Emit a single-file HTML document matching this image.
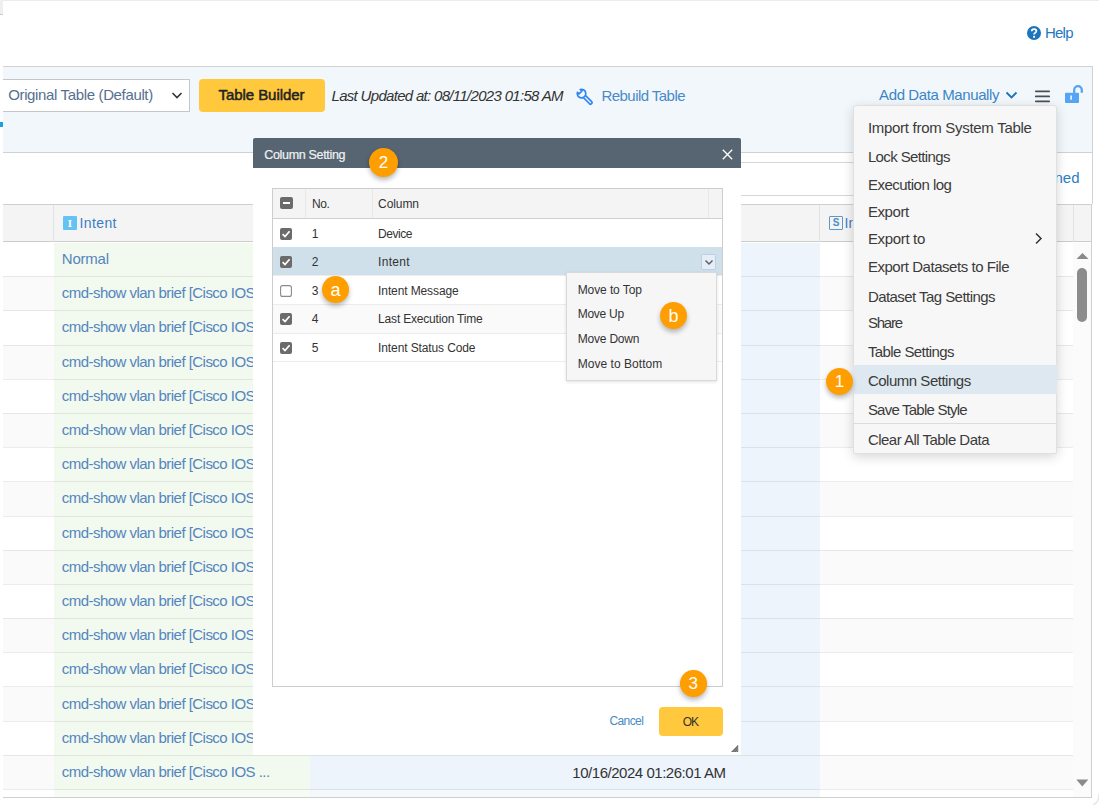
<!DOCTYPE html>
<html><head><meta charset="utf-8"><style>
html,body{margin:0;padding:0;width:1099px;height:807px;overflow:hidden;background:#fff;position:relative;font-family:"Liberation Sans",sans-serif;}
body>div,body>svg,body>span{position:absolute;box-sizing:border-box;}
.tx{position:absolute;white-space:nowrap;line-height:1;}
.bd{position:absolute;border-radius:50%;background:#fe9e00;color:#fff;text-align:center;box-shadow:0 3px 5px rgba(0,0,0,0.28);font-family:"Liberation Sans",sans-serif;}
</style></head><body>
<div style="left:0.00px;top:0.00px;width:1099.00px;height:1.00px;background:#ececec;"></div>
<div style="left:0.00px;top:0.00px;width:3.00px;height:13.50px;background:#efefef;"></div>
<div style="left:0.00px;top:13.50px;width:3.00px;height:1.00px;background:#c9c9c9;"></div>
<svg style="left:1027px;top:26px;width:14px;height:14px;" viewBox="0 0 14 14"><circle cx="7" cy="7" r="7" fill="#1b75bb"/><path d="M4.7 5.3 C4.7 3.9 5.8 3.1 7.1 3.1 C8.5 3.1 9.4 4 9.4 5.1 C9.4 6.3 8.3 6.7 7.7 7.2 C7.2 7.6 7.1 7.9 7.1 8.6" fill="none" stroke="#fff" stroke-width="1.8"/><circle cx="7.1" cy="10.8" r="1.1" fill="#fff"/></svg>
<span id="help" class="tx" style="left:1045.00px;top:24.80px;font-size:15px;color:#1f78c1;letter-spacing:-0.785px;">Help</span>
<div style="left:3.00px;top:66.00px;width:1089.50px;height:87.00px;background:#f2f7fc;border-top:1px solid #d2d2d2;border-bottom:1px solid #d2d2d2;border-right:1px solid #d2d2d2;"></div>
<div style="left:0.00px;top:122.00px;width:3.00px;height:5.00px;background:#1ea0e0;"></div>
<div style="left:3.00px;top:78.50px;width:186.50px;height:33.50px;background:#fff;border:1px solid #c6c6c6;border-left:none;"></div>
<span id="orig" class="tx" style="left:8.20px;top:86.90px;font-size:15px;color:#56708f;letter-spacing:-0.354px;">Original Table (Default)</span>
<svg style="left:171px;top:91px;width:12px;height:9px;" viewBox="0 0 12 9"><path d="M1.5 2 L6 6.5 L10.5 2" fill="none" stroke="#333" stroke-width="1.6"/></svg>
<div style="left:199.00px;top:78.50px;width:126.00px;height:33.50px;background:#ffc83d;border-radius:4px;"></div>
<span id="tb" class="tx" style="left:218.50px;top:87.30px;font-size:15px;color:#222;letter-spacing:-0.061px;-webkit-text-stroke:0.5px #222;">Table Builder</span>
<span id="last" class="tx" style="left:331.50px;top:87.90px;font-size:15px;color:#333;letter-spacing:-0.687px;font-style:italic;">Last Updated at: 08/11/2023 01:58 AM</span>
<svg style="left:574px;top:87px;width:20px;height:20px;" viewBox="0 0 20 20"><path d="M6.24 2.49 A4.3 4.3 0 1 1 3.39 5.34 L5.02 6.97 L7.87 4.12 Z M9.48 10.7 L15.54 16.76 A1.5 1.5 0 0 0 17.66 14.64 L11.6 8.58" fill="none" stroke="#2f86f0" stroke-width="1.7" stroke-linejoin="round"/></svg>
<span id="rebuild" class="tx" style="left:601.50px;top:87.80px;font-size:15px;color:#4a8ac8;letter-spacing:-0.552px;">Rebuild Table</span>
<span id="adm" class="tx" style="left:879.10px;top:87.10px;font-size:15px;color:#3b86c6;letter-spacing:-0.397px;">Add Data Manually</span>
<svg style="left:1005px;top:90px;width:13px;height:10px;" viewBox="0 0 13 10"><path d="M1.5 2.5 L6.5 7.5 L11.5 2.5" fill="none" stroke="#1f70c0" stroke-width="1.8"/></svg>
<svg style="left:1034px;top:88px;width:17px;height:17px;" viewBox="0 0 17 17"><path d="M1.8 3.3 H15.2 M1.8 8.4 H15.2 M1.8 13.3 H15.2" stroke="#4a4f57" stroke-width="1.7" stroke-linecap="round"/></svg>
<svg style="left:1063px;top:84px;width:22px;height:20px;" viewBox="0 0 22 20"><path d="M11.2 9.5 V5.9 A3.8 3.8 0 0 1 18.8 5.9 V8.8" fill="none" stroke="#56a5f5" stroke-width="2.3"/><rect x="2" y="8.8" width="14" height="10.2" rx="1" fill="#56a5f5"/><rect x="7.3" y="11.5" width="1.6" height="4.2" fill="#f2f7fc"/></svg>
<div style="left:600.00px;top:162.00px;width:450.00px;height:34.00px;background:#fff;border-top:1px solid #d6d6d6;border-bottom:1px solid #d6d6d6;"></div>
<div style="left:1091.50px;top:152.00px;width:1.00px;height:52.00px;background:#d2d2d2;"></div>
<span id="ned" class="tx" style="right:19.50px;top:170.40px;font-size:15px;color:#2a7fc0;letter-spacing:0.000px;">Assigned</span>
<div style="left:3.00px;top:204.00px;width:1088.50px;height:38.00px;background:#f4f4f4;border-top:1px solid #cfcfcf;border-bottom:1px solid #cccccc;"></div>
<div style="left:53.00px;top:205.00px;width:1.00px;height:36.50px;background:#e2e2e2;"></div>
<div style="left:819.00px;top:205.00px;width:1.00px;height:36.50px;background:#e2e2e2;"></div>
<div style="left:1073.00px;top:205.00px;width:1.00px;height:36.50px;background:#e2e2e2;"></div>
<div style="left:63px;top:216px;width:14px;height:14px;background:#64c3f3;border-radius:1px;color:#fff;font:bold 11px/14px 'Liberation Serif',serif;text-align:center;">I</div>
<span id="hint" class="tx" style="left:79.50px;top:215.95px;font-size:14px;color:#3b7dc4;letter-spacing:0.392px;">Intent</span>
<div style="left:829px;top:216px;width:14px;height:14px;border:1px solid #5a9acb;border-radius:1px;color:#4a8fc4;font:bold 10px/12px Liberation Sans,sans-serif;text-align:center;">S</div>
<span id="hin" class="tx" style="left:844.50px;top:215.95px;font-size:14px;color:#3b7dc4;letter-spacing:0.000px;">Intent Status</span>
<div style="left:3.00px;top:242.50px;width:1070.00px;height:554.80px;background:#fff;"></div>
<div style="left:3.00px;top:276.40px;width:1070.00px;height:34.19px;background:#fafafa;"></div>
<div style="left:3.00px;top:344.78px;width:1070.00px;height:34.19px;background:#fafafa;"></div>
<div style="left:3.00px;top:413.16px;width:1070.00px;height:34.19px;background:#fafafa;"></div>
<div style="left:3.00px;top:481.54px;width:1070.00px;height:34.19px;background:#fafafa;"></div>
<div style="left:3.00px;top:549.92px;width:1070.00px;height:34.19px;background:#fafafa;"></div>
<div style="left:3.00px;top:618.30px;width:1070.00px;height:34.19px;background:#fafafa;"></div>
<div style="left:3.00px;top:686.68px;width:1070.00px;height:34.19px;background:#fafafa;"></div>
<div style="left:3.00px;top:755.06px;width:1070.00px;height:34.19px;background:#fafafa;"></div>
<div style="left:54.00px;top:242.50px;width:256.00px;height:554.80px;background:#f2f9ee;"></div>
<div style="left:310.00px;top:242.50px;width:510.00px;height:554.80px;background:#edf4fc;"></div>
<div style="left:3.00px;top:276.20px;width:1070.00px;height:1.00px;background:rgba(0,0,0,0.075);"></div>
<div style="left:3.00px;top:310.39px;width:1070.00px;height:1.00px;background:rgba(0,0,0,0.075);"></div>
<div style="left:3.00px;top:344.58px;width:1070.00px;height:1.00px;background:rgba(0,0,0,0.075);"></div>
<div style="left:3.00px;top:378.77px;width:1070.00px;height:1.00px;background:rgba(0,0,0,0.075);"></div>
<div style="left:3.00px;top:412.96px;width:1070.00px;height:1.00px;background:rgba(0,0,0,0.075);"></div>
<div style="left:3.00px;top:447.15px;width:1070.00px;height:1.00px;background:rgba(0,0,0,0.075);"></div>
<div style="left:3.00px;top:481.34px;width:1070.00px;height:1.00px;background:rgba(0,0,0,0.075);"></div>
<div style="left:3.00px;top:515.53px;width:1070.00px;height:1.00px;background:rgba(0,0,0,0.075);"></div>
<div style="left:3.00px;top:549.72px;width:1070.00px;height:1.00px;background:rgba(0,0,0,0.075);"></div>
<div style="left:3.00px;top:583.91px;width:1070.00px;height:1.00px;background:rgba(0,0,0,0.075);"></div>
<div style="left:3.00px;top:618.10px;width:1070.00px;height:1.00px;background:rgba(0,0,0,0.075);"></div>
<div style="left:3.00px;top:652.29px;width:1070.00px;height:1.00px;background:rgba(0,0,0,0.075);"></div>
<div style="left:3.00px;top:686.48px;width:1070.00px;height:1.00px;background:rgba(0,0,0,0.075);"></div>
<div style="left:3.00px;top:720.67px;width:1070.00px;height:1.00px;background:rgba(0,0,0,0.075);"></div>
<div style="left:3.00px;top:754.86px;width:1070.00px;height:1.00px;background:rgba(0,0,0,0.075);"></div>
<div style="left:3.00px;top:789.05px;width:1070.00px;height:1.00px;background:rgba(0,0,0,0.075);"></div>
<div style="left:3.00px;top:796.80px;width:1089.00px;height:1.20px;background:#cfcfcf;"></div>
<div style="left:1091.00px;top:204.00px;width:1.00px;height:593.30px;background:#d0d0d0;"></div>
<div style="left:1073.00px;top:242.50px;width:18.00px;height:554.80px;background:#fbfbfb;"></div>
<div style="left:3.00px;top:790.00px;width:1070.00px;height:7.30px;background:rgba(255,255,255,0.35);"></div>
<span id="normal" class="tx" style="left:61.80px;top:250.90px;font-size:15px;color:#5485be;letter-spacing:-0.229px;">Normal</span>
<span id="cmd0" class="tx" style="left:61.80px;top:285.30px;font-size:15px;color:#5485be;letter-spacing:-0.534px;">cmd-show vlan brief [Cisco IOS ...</span>
<span id="cmd1" class="tx" style="left:61.80px;top:319.49px;font-size:15px;color:#5485be;letter-spacing:-0.534px;">cmd-show vlan brief [Cisco IOS ...</span>
<span id="cmd2" class="tx" style="left:61.80px;top:353.68px;font-size:15px;color:#5485be;letter-spacing:-0.534px;">cmd-show vlan brief [Cisco IOS ...</span>
<span id="cmd3" class="tx" style="left:61.80px;top:387.87px;font-size:15px;color:#5485be;letter-spacing:-0.534px;">cmd-show vlan brief [Cisco IOS ...</span>
<span id="cmd4" class="tx" style="left:61.80px;top:422.06px;font-size:15px;color:#5485be;letter-spacing:-0.534px;">cmd-show vlan brief [Cisco IOS ...</span>
<span id="cmd5" class="tx" style="left:61.80px;top:456.25px;font-size:15px;color:#5485be;letter-spacing:-0.534px;">cmd-show vlan brief [Cisco IOS ...</span>
<span id="cmd6" class="tx" style="left:61.80px;top:490.44px;font-size:15px;color:#5485be;letter-spacing:-0.534px;">cmd-show vlan brief [Cisco IOS ...</span>
<span id="cmd7" class="tx" style="left:61.80px;top:524.63px;font-size:15px;color:#5485be;letter-spacing:-0.534px;">cmd-show vlan brief [Cisco IOS ...</span>
<span id="cmd8" class="tx" style="left:61.80px;top:558.82px;font-size:15px;color:#5485be;letter-spacing:-0.534px;">cmd-show vlan brief [Cisco IOS ...</span>
<span id="cmd9" class="tx" style="left:61.80px;top:593.01px;font-size:15px;color:#5485be;letter-spacing:-0.534px;">cmd-show vlan brief [Cisco IOS ...</span>
<span id="cmd10" class="tx" style="left:61.80px;top:627.20px;font-size:15px;color:#5485be;letter-spacing:-0.534px;">cmd-show vlan brief [Cisco IOS ...</span>
<span id="cmd11" class="tx" style="left:61.80px;top:661.39px;font-size:15px;color:#5485be;letter-spacing:-0.534px;">cmd-show vlan brief [Cisco IOS ...</span>
<span id="cmd12" class="tx" style="left:61.80px;top:695.58px;font-size:15px;color:#5485be;letter-spacing:-0.534px;">cmd-show vlan brief [Cisco IOS ...</span>
<span id="cmd13" class="tx" style="left:61.80px;top:729.77px;font-size:15px;color:#5485be;letter-spacing:-0.534px;">cmd-show vlan brief [Cisco IOS ...</span>
<span id="cmd14" class="tx" style="left:61.80px;top:763.96px;font-size:15px;color:#5485be;letter-spacing:-0.534px;">cmd-show vlan brief [Cisco IOS ...</span>
<span id="date" class="tx" style="left:572.30px;top:765.10px;font-size:15px;color:#333;letter-spacing:-0.466px;">10/16/2024 01:26:01 AM</span>
<svg style="left:1076px;top:252px;width:13px;height:8px;" viewBox="0 0 13 8"><path d="M0.5 7 L6.5 1 L12.5 7 Z" fill="#8a8a8a"/></svg>
<div style="left:1077.00px;top:268.00px;width:10.00px;height:54.00px;background:#8c8c8c;border-radius:5px;"></div>
<svg style="left:1076px;top:778.5px;width:13px;height:9px;" viewBox="0 0 13 9"><path d="M0.3 0.6 L6.3 7.6 L12.3 0.6 Z" fill="#8a8a8a"/></svg>
<svg style="left:1090px;top:792px;width:9px;height:15px;" viewBox="0 0 9 15"><path d="M9 2 Q9 11 3 12.5" fill="none" stroke="#e6e6e6" stroke-width="1.4"/></svg>
<div style="left:253.00px;top:138.40px;width:488.00px;height:617.00px;background:#fff;border-radius:2px 2px 0 0;"></div>
<div style="left:253.00px;top:138.40px;width:488.00px;height:30.00px;background:#566571;border-radius:2px 2px 0 0;"></div>
<span id="dtitle" class="tx" style="left:264.30px;top:149.42px;font-size:12.5px;color:#f0f2f4;letter-spacing:-0.328px;-webkit-text-stroke:0.2px #f0f2f4;">Column Setting</span>
<svg style="left:722px;top:149px;width:11px;height:11px;" viewBox="0 0 11 11"><path d="M0.8 0.8 L10.2 10.2 M10.2 0.8 L0.8 10.2" stroke="#fff" stroke-width="1.3"/></svg>
<div style="left:272.00px;top:188.20px;width:451.00px;height:498.60px;background:#fff;border:1px solid #cdcdcd;box-sizing:border-box;"></div>
<div style="left:273.00px;top:189.20px;width:449.00px;height:29.50px;background:#f4f4f4;border-bottom:1px solid #d0d0d0;"></div>
<div style="left:305.00px;top:189.20px;width:1.00px;height:29.00px;background:#e8e8e8;"></div>
<div style="left:372.00px;top:189.20px;width:1.00px;height:29.00px;background:#e8e8e8;"></div>
<div style="left:707.70px;top:189.20px;width:1.00px;height:29.00px;background:#e8e8e8;"></div>
<div style="left:273.00px;top:304.20px;width:449.00px;height:28.80px;background:#fafafa;"></div>
<div style="left:273.00px;top:247.30px;width:449.00px;height:28.40px;background:#cfe0ea;"></div>
<div style="left:273.00px;top:275.20px;width:449.00px;height:1.00px;background:#ececec;"></div>
<div style="left:273.00px;top:303.70px;width:449.00px;height:1.00px;background:#ececec;"></div>
<div style="left:273.00px;top:332.50px;width:449.00px;height:1.00px;background:#ececec;"></div>
<div style="left:273.00px;top:360.70px;width:449.00px;height:1.00px;background:#ececec;"></div>
<div style="left:280px;top:197px;width:12.5px;height:12px;background:#6b6b6b;border-radius:2px;"></div>
<div style="left:282.60px;top:202.20px;width:7.30px;height:1.80px;background:#fff;"></div>
<span id="no" class="tx" style="left:312.00px;top:197.84px;font-size:12px;color:#333;letter-spacing:-0.444px;">No.</span>
<span id="colh" class="tx" style="left:378.10px;top:197.74px;font-size:12px;color:#333;letter-spacing:-0.091px;">Column</span>
<svg style="left:279.8px;top:228.2px;width:12px;height:12px;" viewBox="0 0 12 12"><rect x="0" y="0" width="12" height="12" rx="2" fill="#6b6b6b"/><path d="M2.6 6.2 L5 8.6 L9.6 3.2" fill="none" stroke="#fff" stroke-width="1.7"/></svg>
<span id="dn1" class="tx" style="left:311.70px;top:228.34px;font-size:12px;color:#333;letter-spacing:0.000px;">1</span>
<span id="dc1" class="tx" style="left:378.10px;top:228.34px;font-size:12px;color:#333;letter-spacing:-0.459px;">Device</span>
<svg style="left:279.8px;top:256.3px;width:12px;height:12px;" viewBox="0 0 12 12"><rect x="0" y="0" width="12" height="12" rx="2" fill="#6b6b6b"/><path d="M2.6 6.2 L5 8.6 L9.6 3.2" fill="none" stroke="#fff" stroke-width="1.7"/></svg>
<span id="dn2" class="tx" style="left:311.70px;top:256.24px;font-size:12px;color:#333;letter-spacing:0.000px;">2</span>
<span id="dc2" class="tx" style="left:378.10px;top:256.24px;font-size:12px;color:#333;letter-spacing:0.313px;">Intent</span>
<svg style="left:279.8px;top:284.7px;width:12px;height:12px;" viewBox="0 0 12 12"><rect x="0.6" y="0.6" width="10.8" height="10.8" rx="2" fill="#fff" stroke="#8a8a8a" stroke-width="1.1"/></svg>
<span id="dn3" class="tx" style="left:311.70px;top:285.24px;font-size:12px;color:#333;letter-spacing:0.000px;">3</span>
<span id="dc3" class="tx" style="left:378.10px;top:285.24px;font-size:12px;color:#333;letter-spacing:-0.112px;">Intent Message</span>
<svg style="left:279.8px;top:313.2px;width:12px;height:12px;" viewBox="0 0 12 12"><rect x="0" y="0" width="12" height="12" rx="2" fill="#6b6b6b"/><path d="M2.6 6.2 L5 8.6 L9.6 3.2" fill="none" stroke="#fff" stroke-width="1.7"/></svg>
<span id="dn4" class="tx" style="left:311.70px;top:313.44px;font-size:12px;color:#333;letter-spacing:0.000px;">4</span>
<span id="dc4" class="tx" style="left:378.10px;top:313.44px;font-size:12px;color:#333;letter-spacing:-0.187px;">Last Execution Time</span>
<svg style="left:279.8px;top:342.0px;width:12px;height:12px;" viewBox="0 0 12 12"><rect x="0" y="0" width="12" height="12" rx="2" fill="#6b6b6b"/><path d="M2.6 6.2 L5 8.6 L9.6 3.2" fill="none" stroke="#fff" stroke-width="1.7"/></svg>
<span id="dn5" class="tx" style="left:311.70px;top:342.14px;font-size:12px;color:#333;letter-spacing:0.000px;">5</span>
<span id="dc5" class="tx" style="left:378.10px;top:342.14px;font-size:12px;color:#333;letter-spacing:-0.118px;">Intent Status Code</span>
<div style="left:701px;top:254.2px;width:15px;height:15.5px;border:1px solid #bdd0e8;background:#e4edf8;border-radius:1px;"></div>
<svg style="left:703.5px;top:259px;width:10px;height:7px;" viewBox="0 0 10 7"><path d="M1.5 1.5 L5 5 L8.5 1.5" fill="none" stroke="#616161" stroke-width="1.5"/></svg>
<div style="left:565.60px;top:272.30px;width:151.70px;height:108.70px;background:#f6f6f6;border:1px solid #d9d9d9;box-sizing:border-box;box-shadow:0 1px 3px rgba(0,0,0,0.12);"></div>
<span id="mv1" class="tx" style="left:577.70px;top:284.14px;font-size:12px;color:#333;letter-spacing:-0.096px;">Move to Top</span>
<span id="mv2" class="tx" style="left:577.70px;top:308.34px;font-size:12px;color:#333;letter-spacing:-0.254px;">Move Up</span>
<span id="mv3" class="tx" style="left:577.70px;top:333.04px;font-size:12px;color:#333;letter-spacing:-0.195px;">Move Down</span>
<span id="mv4" class="tx" style="left:577.70px;top:357.74px;font-size:12px;color:#333;letter-spacing:0.043px;">Move to Bottom</span>
<span id="cancel" class="tx" style="left:609.50px;top:715.34px;font-size:12px;color:#4a8ac4;letter-spacing:-0.612px;">Cancel</span>
<div style="left:659.20px;top:707.30px;width:64.00px;height:28.40px;background:#ffc83d;border-radius:4px;"></div>
<span id="ok" class="tx" style="left:682.70px;top:715.64px;font-size:12px;color:#333;letter-spacing:-1.042px;">OK</span>
<svg style="left:730px;top:744px;width:9px;height:9px;" viewBox="0 0 9 9"><path d="M8.2 0.8 L1 8 L8.2 8 Z" fill="#6a6a6a"/><path d="M8.5 3 L3 8.5 M8.5 5.5 L5.5 8.5" stroke="#fff" stroke-width="0.6" opacity="0.5"/></svg>
<div style="left:853.00px;top:105.00px;width:204.00px;height:348.50px;background:#f7f7f7;border:1px solid #e0e0e0;border-radius:3px 3px 2px 2px;box-shadow:0 3px 12px rgba(0,0,0,0.16);"></div>
<div style="left:853.00px;top:365.20px;width:204.00px;height:28.60px;background:#dde8f0;"></div>
<div style="left:853.00px;top:423.40px;width:204.00px;height:1.00px;background:#dcdcdc;"></div>
<span id="m0" class="tx" style="left:867.90px;top:120.30px;font-size:15px;color:#3b3b3b;letter-spacing:-0.288px;">Import from System Table</span>
<span id="m1" class="tx" style="left:867.90px;top:149.10px;font-size:15px;color:#3b3b3b;letter-spacing:-0.621px;">Lock Settings</span>
<span id="m2" class="tx" style="left:867.90px;top:176.50px;font-size:15px;color:#3b3b3b;letter-spacing:-0.505px;">Execution log</span>
<span id="m3" class="tx" style="left:867.90px;top:203.80px;font-size:15px;color:#3b3b3b;letter-spacing:-0.411px;">Export</span>
<span id="m4" class="tx" style="left:867.90px;top:231.20px;font-size:15px;color:#3b3b3b;letter-spacing:-0.329px;">Export to</span>
<span id="m5" class="tx" style="left:867.90px;top:258.70px;font-size:15px;color:#3b3b3b;letter-spacing:-0.456px;">Export Datasets to File</span>
<span id="m6" class="tx" style="left:867.90px;top:288.50px;font-size:15px;color:#3b3b3b;letter-spacing:-0.555px;">Dataset Tag Settings</span>
<span id="m7" class="tx" style="left:867.90px;top:315.30px;font-size:15px;color:#3b3b3b;letter-spacing:-1.184px;">Share</span>
<span id="m8" class="tx" style="left:867.90px;top:344.30px;font-size:15px;color:#3b3b3b;letter-spacing:-0.587px;">Table Settings</span>
<span id="m9" class="tx" style="left:867.90px;top:373.30px;font-size:15px;color:#3b3b3b;letter-spacing:-0.483px;">Column Settings</span>
<span id="m10" class="tx" style="left:867.90px;top:402.30px;font-size:15px;color:#3b3b3b;letter-spacing:-0.778px;">Save Table Style</span>
<span id="m11" class="tx" style="left:867.90px;top:432.40px;font-size:15px;color:#3b3b3b;letter-spacing:-0.520px;">Clear All Table Data</span>
<svg style="left:1034px;top:232px;width:9px;height:13px;" viewBox="0 0 9 13"><path d="M2 1.5 L7 6.5 L2 11.5" fill="none" stroke="#333" stroke-width="1.5"/></svg>
<div class="bd" style="left:826.0px;top:367.9px;width:27.0px;height:27.0px;font-size:17px;line-height:28.6px;">1</div>
<div class="bd" style="left:369.0px;top:147.5px;width:29.0px;height:29.0px;font-size:17px;line-height:30.6px;">2</div>
<div class="bd" style="left:322.0px;top:276.0px;width:27.0px;height:27.0px;font-size:18px;line-height:28.6px;">a</div>
<div class="bd" style="left:660.1px;top:301.8px;width:27.0px;height:27.0px;font-size:18px;line-height:28.6px;">b</div>
<div class="bd" style="left:680.1px;top:670.0px;width:26.5px;height:26.5px;font-size:17px;line-height:28.1px;">3</div>
</body></html>
